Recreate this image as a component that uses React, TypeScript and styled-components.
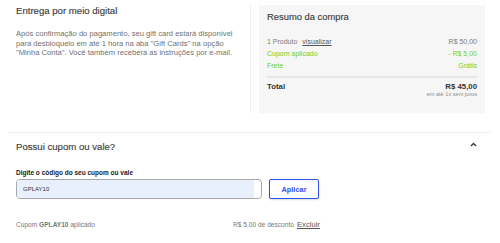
import React from "react";
import styled, { createGlobalStyle } from "styled-components";

const Global = createGlobalStyle`
  html, body { margin: 0; padding: 0; background: #fff; }
  body { font-family: "Liberation Sans", Arial, sans-serif; width: 500px; height: 243px; overflow: hidden; }
  * { box-sizing: border-box; }
`;

const Page = styled.div`
  width: 500px;
  display: flex;
  flex-direction: column;
`;

const Top = styled.div`
  display: flex;
  align-items: stretch;
  padding: 5px 16px 0 16px;
  height: 113px;
`;

const Delivery = styled.div`
  flex: 0 0 234px;
  padding-right: 14px;
  border-right: 1px solid #ececec;
`;

const Heading = styled.h2`
  margin: 0;
  font-size: 9.6px;
  line-height: 12px;
  font-weight: 400;
  color: #3d3d3d;
  -webkit-text-stroke: 0.15px #3d3d3d;
`;

const Paragraph = styled.p`
  margin: 12px 0 0 0;
  width: 220px;
  font-size: 7.6px;
  line-height: 9.6px;
  color: #707070;
`;

const Summary = styled.div`
  margin-left: 8px;
  flex: 0 0 226px;
  background: #f6f6f6;
  padding: 6px 8px 0 8px;
`;

const SummaryTitle = styled(Heading)`
  font-size: 9.4px;
  line-height: 11px;
`;

const Rows = styled.div`
  margin-top: 14px;
  display: flex;
  flex-direction: column;
`;

const Row = styled.div<{ $green?: boolean }>`
  display: flex;
  justify-content: space-between;
  align-items: center;
  height: 12px;
  font-size: 7px;
  line-height: 12px;
  color: ${(p) => (p.$green ? "#72cf2a" : "#7a7a7a")};
`;

const Link = styled.span`
  margin-left: 5px;
  color: #555;
  text-decoration: underline;
`;

const Divider = styled.div`
  margin-top: 4px;
  height: 2px;
  background: #e6e6e6;
`;

const TotalRow = styled.div`
  margin-top: 4px;
  display: flex;
  justify-content: space-between;
  align-items: flex-start;
`;

const TotalLabel = styled.span`
  font-size: 7.8px;
  line-height: 9px;
  font-weight: 700;
  color: #333;
`;

const TotalValue = styled.div`
  display: flex;
  flex-direction: column;
  align-items: flex-end;
`;

const Installments = styled.span`
  font-size: 5.6px;
  line-height: 6px;
  color: #8a8a8a;
`;

const Rule = styled.hr`
  margin: 19px 9px 0 8px;
  border: 0;
  height: 1px;
  background: #ededed;
`;

const Coupon = styled.section`
  padding: 8px 23px 0 16px;
  display: flex;
  flex-direction: column;
`;

const CouponHeader = styled.div`
  display: flex;
  justify-content: space-between;
  align-items: center;
  height: 12px;
`;

const Chevron = styled.svg`
  width: 7px;
  height: 5px;
  margin-top: -5px;
`;

const Form = styled.div`
  width: 304px;
  display: flex;
  flex-direction: column;
`;

const Label = styled.label`
  margin-top: 16px;
  font-size: 6.5px;
  line-height: 8px;
  font-weight: 700;
  color: #222;
`;

const InputRow = styled.div`
  margin-top: 2px;
  display: flex;
  gap: 7px;
  height: 20px;
`;

const InputBox = styled.div`
  flex: 0 0 246px;
  display: flex;
  border: 1px solid #a8a8a8;
  border-radius: 4px;
  overflow: hidden;
`;

const Input = styled.input`
  flex: 1;
  margin-right: 7px;
  border: 0;
  outline: none;
  background: #e8f0fe;
  padding: 0 0 0 6px;
  font-family: inherit;
  font-size: 6px;
  color: #333;
`;

const ApplyButton = styled.button`
  flex: 0 0 50px;
  height: 20px;
  border: 1.5px solid #2d52f2;
  border-radius: 2px;
  background: #fff;
  color: #2d52f2;
  font-family: inherit;
  font-weight: 700;
  font-size: 7.4px;
  padding: 0;
  box-shadow: 0 1px 2px rgba(0, 0, 0, 0.15);
`;

const Applied = styled.div`
  margin-top: 21px;
  display: flex;
  justify-content: space-between;
  align-items: baseline;
  font-size: 6.6px;
  color: #777;
`;

const Discount = styled.div`
  display: flex;
  align-items: baseline;
  gap: 3px;
`;

const Remove = styled.span`
  font-size: 7.7px;
  color: #555;
  text-decoration: underline;
`;

export default function App() {
  return (
    <Page>
      <Global />
      <Top>
        <Delivery>
          <Heading>Entrega por meio digital</Heading>
          <Paragraph>
            Após confirmação do pagamento, seu gift card estará disponível para desbloqueio em até 1 hora na aba "Gift Cards" na opção "Minha Conta". Você também receberá as instruções por e-mail.
          </Paragraph>
        </Delivery>
        <Summary>
          <SummaryTitle>Resumo da compra</SummaryTitle>
          <Rows>
            <Row>
              <span>
                1 Produto<Link>visualizar</Link>
              </span>
              <span>R$ 50,00</span>
            </Row>
            <Row $green>
              <span>Cupom aplicado</span>
              <span>- R$ 5,00</span>
            </Row>
            <Row $green>
              <span>Frete</span>
              <span>Grátis</span>
            </Row>
          </Rows>
          <Divider />
          <TotalRow>
            <TotalLabel>Total</TotalLabel>
            <TotalValue>
              <TotalLabel>R$ 45,00</TotalLabel>
              <Installments>em até 1x sem juros</Installments>
            </TotalValue>
          </TotalRow>
        </Summary>
      </Top>
      <Rule />
      <Coupon>
        <CouponHeader>
          <Heading>Possui cupom ou vale?</Heading>
          <Chevron viewBox="0 0 7 5">
            <polyline points="1,4 3.5,1.5 6,4" fill="none" stroke="#333" strokeWidth="1.3" />
          </Chevron>
        </CouponHeader>
        <Form>
          <Label>Digite o código do seu cupom ou vale</Label>
          <InputRow>
            <InputBox>
              <Input readOnly value="GPLAY10" />
            </InputBox>
            <ApplyButton>Aplicar</ApplyButton>
          </InputRow>
          <Applied>
            <span>
              Cupom <b>GPLAY10</b> aplicado
            </span>
            <Discount>
              <span>R$ 5,00 de desconto</span>
              <Remove>Excluir</Remove>
            </Discount>
          </Applied>
        </Form>
      </Coupon>
    </Page>
  );
}
